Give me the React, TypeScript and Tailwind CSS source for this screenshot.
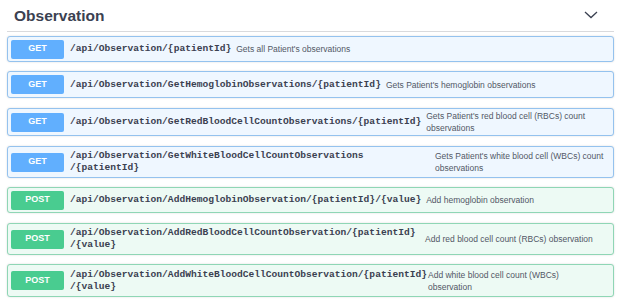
import React from "react";

type Row = {
  method: "GET" | "POST";
  path: string[];
  desc: string[];
  pathW?: string;
  box: string;
};

const rows: Row[] = [
  { method: "GET", path: ["/api/Observation/{patientId}"], desc: ["Gets all Patient's observations"], box: "h-[26px] mt-[4px]" },
  { method: "GET", path: ["/api/Observation/GetHemoglobinObservations/{patientId}"], desc: ["Gets Patient's hemoglobin observations"], box: "h-[27px] mt-[9px]" },
  { method: "GET", path: ["/api/Observation/GetRedBloodCellCountObservations/{patientId}"], desc: ["Gets Patient's red blood cell (RBCs) count", "observations"], box: "h-[28px] mt-[10px]" },
  { method: "GET", path: ["/api/Observation/GetWhiteBloodCellCountObservations", "/{patientId}"], desc: ["Gets Patient's white blood cell (WBCs) count", "observations"], pathW: "w-[371px]", box: "h-[32px] mt-[10px]" },
  { method: "POST", path: ["/api/Observation/AddHemoglobinObservation/{patientId}/{value}"], desc: ["Add hemoglobin observation"], box: "h-[26px] mt-[9px]" },
  { method: "POST", path: ["/api/Observation/AddRedBloodCellCountObservation/{patientId}", "/{value}"], desc: ["Add red blood cell count (RBCs) observation"], pathW: "w-[361px]", box: "h-[32px] mt-[10px]" },
  { method: "POST", path: ["/api/Observation/AddWhiteBloodCellCountObservation/{patientId}", "/{value}"], desc: ["Add white blood cell count (WBCs)", "observation"], pathW: "w-[364px]", box: "h-[33px] mt-[9px]" },
];

function OpRow({ r }: { r: Row }) {
  const get = r.method === "GET";
  return (
    <div
      className={`${r.box} flex items-center rounded-[3px] border px-[3px] shadow-[0_0_2px_rgba(0,0,0,0.15)] ${
        get ? "bg-[#eff7ff] border-[#94c2ee]" : "bg-[#edfaf4] border-[#8fd6b5]"
      }`}
    >
      <div
        className={`w-[53px] h-[19px] shrink-0 rounded-[2px] flex items-center justify-center text-white font-bold text-[9px] ${
          get ? "bg-[#61affe]" : "bg-[#49cc90]"
        }`}
        style={{ fontFamily: '"Liberation Sans", Arial, sans-serif' }}
      >
        {r.method}
      </div>
      <div
        className={`pl-[6px] pr-[5px] shrink-0 ${r.pathW ?? ""} text-[9.6px] leading-[12px] font-bold text-[#3b4151] whitespace-nowrap`}
        style={{ fontFamily: '"Liberation Mono", "DejaVu Sans Mono", monospace' }}
      >
        {r.path.map((l, i) => (
          <div key={i}>{l}</div>
        ))}
      </div>
      <div
        className="text-[8.5px] leading-[12px] text-[#525766] whitespace-nowrap"
        style={{ fontFamily: '"Liberation Sans", Arial, sans-serif' }}
      >
        {r.desc.map((l, i) => (
          <div key={i}>{l}</div>
        ))}
      </div>
    </div>
  );
}

export default function App() {
  return (
    <div className="w-[624px] h-[304px] bg-white pl-[7px] pr-[10px] overflow-hidden">
      <div className="h-[32px] flex items-center justify-between border-b border-[#d9dadd] pl-[7px] pr-[16px]">
        <span
          className="text-[15.5px] font-bold text-[#3b4151] leading-none"
          style={{ fontFamily: '"Liberation Sans", Arial, sans-serif' }}
        >
          Observation
        </span>
        <svg width="14" height="8" viewBox="0 0 14 8" className="mt-[-2px]">
          <polyline points="1,1 7,6.5 13,1" fill="none" stroke="#3b4151" strokeWidth="1.3" />
        </svg>
      </div>
      {rows.map((r, i) => (
        <OpRow key={i} r={r} />
      ))}
    </div>
  );
}
